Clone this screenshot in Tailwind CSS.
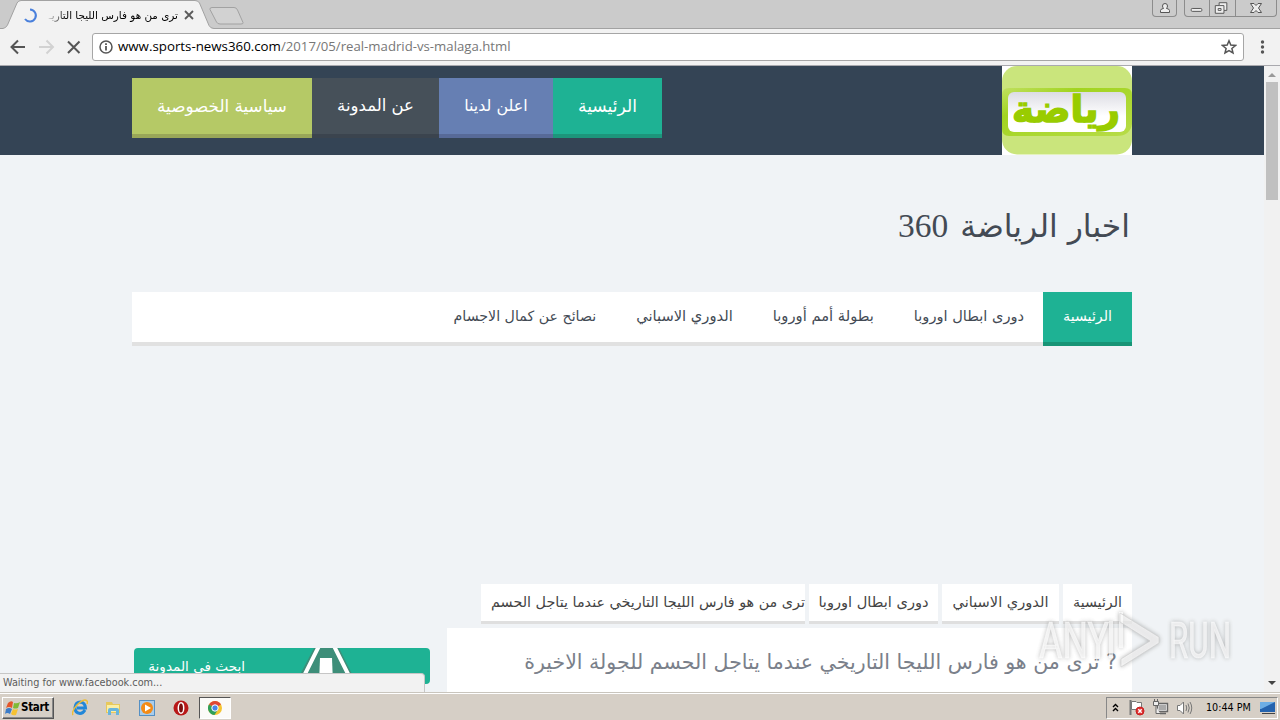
<!DOCTYPE html>
<html lang="ar">

<head>
    <meta charset="UTF-8">
    <meta name="viewport" content="width=device-width, initial-scale=1.0">
    <title>ترى من هو فارس الليجا التاريخي</title>
    <script src="https://cdn.jsdelivr.net/npm/@tailwindcss/browser@4"></script>
</head>

<body class="h-screen w-screen overflow-hidden bg-[#f0f3f6] font-['DejaVu_Sans',sans-serif]">
    <div class="flex h-full flex-col">
        <!-- tab strip -->
        <div class="relative flex h-7 shrink-0 justify-between bg-[#cbcbcb]">
            <svg class="absolute left-0 top-0" width="1280" height="29" fill="none">
                <path d="M0 28.500H3Q6 28 7.500 25L17 3Q18.500.5 21 .5H195Q198 .5 199.500 3L209 25.500Q210.500 28.500 214 28.500V30H0Z"
                    fill="#f2f2f2" />
                <path d="M0 28.500H3Q6 28 7.500 25L17 3Q18.500.5 21 .5H195Q198 .5 199.500 3L209 25.500Q210.500 28.500 214 28.500H1280" stroke="#a2a2a2" />
                <path d="M212 7.500H234Q236.500 7.500 237.500 10L243 22.500Q243.500 24 241 24H220Q217.500 24 216.500 22L210 9.500Q209.500 7.500 212 7.500Z"
                    fill="#d2d2d2" stroke="#a2a2a2" />
            </svg>
            <div class="relative flex h-full items-center pl-[23px] pt-0.5">
                <svg width="15" height="15" fill="none" stroke="#4a80dc" stroke-width="2">
                    <path d="M7 1.500A6 6 0 1 1 2 11" />
                </svg>
                <div dir="rtl" class="ml-2 w-[132px] whitespace-nowrap text-[10.4px] leading-5 text-black mask-l-from-85% mask-l-to-100%">ترى من هو فارس الليجا التاريـ</div>
                <svg class="ml-1.5" width="10" height="10" stroke="#5a5a5a" stroke-width="1.800">
                    <path d="M1 1L9 9M9 1L1 9" />
                </svg>
            </div>
            <div class="relative flex gap-[7px] pr-[3px]">
                <div class="flex h-[17px] w-[25px] items-center justify-center rounded-b border border-t-0 border-[#8c8c8c]">
                    <svg width="12" height="12" fill="#eee" stroke="#555">
                        <path d="M1.500 10.500V8.500Q2 6.500 4.500 6.500Q3.500 5 3.500 4Q3.500 1.500 6 1.500T8.500 4Q8.500 5 7.500 6.500Q10 6.500 10.500 8.500V10.500Z" />
                    </svg>
                </div>
                <div class="flex h-[17px] w-[93px] divide-x divide-[#8c8c8c] rounded-b border border-t-0 border-[#8c8c8c]">
                    <svg class="h-full w-[25px]" viewBox="0 0 25 16" fill="#eee" stroke="#555">
                        <rect x="6.500" y="8.500" width="11" height="3" rx="1" />
                    </svg>
                    <svg class="h-full w-[26px]" viewBox="0 0 26 16" fill="#eee" stroke="#555">
                        <path d="M9.500 2.500H17.500V10.500H14.500V13.500H5.500V5.500H9.500Z" />
                        <path d="M9.500 5.500H14.500V10.500M8.500 8.500H11.500V10.500H8.500Z" />
                    </svg>
                    <svg class="h-full w-10" viewBox="0 0 40 16" fill="#eee" stroke="#555">
                        <path d="M14.500 3.500H18L20 5.500L22 3.500H25.500L22.500 8L25.500 12.500H22L20 10.500L18 12.500H14.500L17.500 8Z" />
                    </svg>
                </div>
            </div>
        </div>

        <!-- toolbar -->
        <div class="flex h-[38px] shrink-0 items-center border-b border-[#a9a9ae] bg-[#f2f2f2] font-['Open_Sans',sans-serif] shadow-[inset_0_1px_#a2a2a2]">
            <svg width="92" height="38" class="shrink-0" fill="none" stroke="#555" stroke-width="2">
                <path d="M0 0H214" stroke="#f2f2f2" stroke-width="3" />
                <path d="M25 19H12M18 12.500L11.500 19L18 25.500" />
                <path d="M39 19H52M46.500 12.500L53 19L46.500 25.500" stroke="#d2d2d2" />
                <path d="M68 13.500L79.500 25M79.500 13.500L68 25" />
            </svg>
            <div class="flex h-7 w-[1152px] shrink-0 items-center rounded-[3px] border border-[#a6a6a6] bg-white px-1.5 text-[13.2px]">
                <svg width="14" height="14" fill="none" stroke="#555" stroke-width="1.500">
                    <circle cx="7" cy="7" r="6" />
                    <path d="M7 6V10.500M7 3.300V4.900" stroke-width="1.800" />
                </svg>
                <span class="ml-[5px] text-[13.3px] text-black">www.sports-news360.com</span><span class="text-[#777]">/2017/05/real-madrid-vs-malaga.html</span>
                <svg class="ml-auto" width="16" height="16" fill="none" stroke="#555" stroke-width="1.500">
                    <path d="M8 1.800L9.800 6.100L14.500 6.500L10.900 9.500L12 14L8 11.600L4 14L5.100 9.500L1.500 6.500L6.200 6.100Z" />
                </svg>
            </div>
            <svg class="ml-4" width="5" height="16" fill="#555">
                <circle cx="2.500" cy="3" r="1.700" />
                <circle cx="2.500" cy="8" r="1.700" />
                <circle cx="2.500" cy="13" r="1.700" />
            </svg>
        </div>

        <!-- page -->
        <div class="relative flex min-h-0 flex-1 overflow-hidden">
            <div dir="rtl" class="w-[1264px] shrink-0">
                <header class="h-[89px] bg-[#344455]">
                    <div class="mx-auto flex w-[1000px] items-start justify-between">
                        <svg width="130" height="89" direction="ltr">
                            <defs>
                                <linearGradient id="plate" x2="0" y2="1">
                                    <stop stop-color="#dcdce4" />
                                    <stop offset=".6" stop-color="#fff" />
                                </linearGradient>
                                <linearGradient id="ring" x2="1" y2="1">
                                    <stop stop-color="#c0e060" />
                                    <stop offset=".3" stop-color="#a2d420" />
                                    <stop offset="1" stop-color="#b8dc48" />
                                </linearGradient>
                            </defs>
                            <rect width="130" height="89" fill="#fff" />
                            <rect width="130" height="88.500" rx="15" fill="#cae57c" />
                            <path d="M7 22H123Q130 22 130 29V58Q128 70 115 70H7Q0 70 0 63V29Q0 22 7 22Z" fill="url(#ring)" />
                            <rect x="6" y="26" width="118" height="40" rx="6" fill="url(#plate)" />
                            <text x="64" y="56" text-anchor="middle" direction="rtl" textLength="108" lengthAdjust="spacingAndGlyphs"
                                class="font-['DejaVu_Sans'] text-[37px] font-bold" fill="#9c0" stroke="#9c0" stroke-width="1.500">رياضة</text>
                        </svg>
                        <nav class="mt-3 flex h-[60px] whitespace-nowrap leading-[56px] text-white">
                            <a class="w-[109px] border-b-4 border-[#1d957b] bg-[#1eb294] text-center text-[17.1px]">الرئيسية</a>
                            <a class="w-[114px] border-b-4 border-[#576a98] bg-[#667fb3] text-center text-[15.9px]">اعلن لدينا</a>
                            <a class="w-[127px] border-b-4 border-[#3b444e] bg-[#465059] text-center text-[16.5px]">عن المدونة</a>
                            <a class="w-[180px] border-b-4 border-[#99a758] bg-[#b5c966] text-center text-[16.8px]">سياسية الخصوصية</a>
                        </nav>
                    </div>
                </header>

                <div class="mx-auto w-[1000px]">
                    <h1 class="flex h-[137px] items-center gap-3 pr-0.5 pt-1.5 text-[31.4px] text-[#434a54]">
                        <span>اخبار الرياضة</span>
                        <span class="font-['Liberation_Serif',serif] text-[33.5px]">360</span>
                    </h1>

                    <nav class="flex h-[54px] whitespace-nowrap border-b-4 border-[#e1e1e1] bg-white text-[14.7px] leading-[48px] text-[#434a54]">
                        <a class="h-[54px] w-[89px] border-b-4 border-[#189476] bg-[#1eb294] text-center text-[14.2px] text-white">الرئيسية</a>
                        <a class="pr-[19px] text-[14.6px]">دورى ابطال اوروبا</a>
                        <a class="pr-10">بطولة أمم أوروبا</a>
                        <a class="pr-10">الدوري الاسباني</a>
                        <a class="pr-10 text-[14.2px]">نصائح عن كمال الاجسام</a>
                    </nav>

                    <div class="mt-[238px] flex gap-1 whitespace-nowrap text-[14.6px] leading-9 text-[#444]">
                        <a class="h-10 w-[69px] border-b-3 border-[#dfdfdf] bg-white text-center text-[14.2px]">الرئيسية</a>
                        <a class="h-10 w-[117px] border-b-3 border-[#dfdfdf] bg-white text-center">الدوري الاسباني</a>
                        <a class="h-10 w-[129px] border-b-3 border-[#dfdfdf] bg-white text-center">دورى ابطال اوروبا</a>
                        <a class="h-10 w-[324px] border-b-3 border-[#dfdfdf] bg-white text-[14.35px]">ترى من هو فارس الليجا التاريخي عندما يتاجل الحسم</a>
                    </div>

                    <div class="mt-1 flex justify-between">
                        <article class="h-[90px] w-[685px] bg-white pr-[15px]">
                            <h2 class="whitespace-nowrap text-[20.55px] leading-[68px] text-[#7a808a]">? ترى من هو فارس الليجا التاريخي عندما يتاجل الحسم للجولة الاخيرة</h2>
                        </article>
                        <aside dir="ltr" class="mt-5 flex h-9 w-[300px] justify-start pl-0.5">
                            <div class="flex w-[296px] rounded-sm bg-[#1eb294] pl-3.5 text-white">
                                <span dir="rtl" class="w-[97px] whitespace-nowrap text-[13.6px] leading-9">ابحث فى المدونة</span>
                                <svg class="ml-14" width="54" height="36">
                                    <path d="M13 0H38L56 36H-6Z" fill="#3d8e79" />
                                    <path d="M18-2L-1 36M33-2L52 36" stroke="#fff" stroke-width="4" />
                                    <path d="M19 10H31L32 36H18Z" fill="#fff" />
                                </svg>
                            </div>
                        </aside>
                    </div>
                </div>
            </div>

            <!-- scrollbar -->
            <div class="flex w-4 flex-col items-center bg-[#f1f1f1]">
                <svg width="16" height="16" fill="#999">
                    <path d="M4 11L8 7L12 11Z" />
                </svg>
                <div class="h-[118px] w-3 bg-[#c0c0c0]"></div>
                <svg class="mt-auto" width="16" height="17" fill="#444">
                    <path d="M4 6L8 10L12 6Z" />
                </svg>
            </div>

            <!-- status bubble -->
            <div class="absolute bottom-0 left-0 h-[19px] w-[425px] rounded-tr border border-b-0 border-l-0 border-[#c6c6c6] bg-[#f2f2f2] pl-[3px] font-['DejaVu_Sans_Condensed',sans-serif] text-[10.8px] leading-[18px] text-[#5c5c5c]">Waiting for www.facebook.com...</div>

            <!-- watermark -->
            <svg class="absolute bottom-3 right-[38px] overflow-visible opacity-90 drop-shadow-[0_0_2px_rgba(110,110,110,.7)]" width="206" height="80" fill="#fff">
                <g class="font-['Roboto'] text-[50px]" fill-opacity=".7" stroke="#fff" stroke-opacity=".5">
                    <text x="3" y="58" textLength="70" lengthAdjust="spacingAndGlyphs">ANY</text>
                    <text x="133" y="58" textLength="62" lengthAdjust="spacingAndGlyphs">RUN</text>
                </g>
                <path d="M75 21V58M85 12V48" fill="none" stroke="#fff" stroke-width="4" stroke-opacity=".7" />
                <path d="M84 13L123 37V43L85 67V59L114 41L84 22Z" fill="#fff" stroke="#ccc" stroke-width=".7" fill-opacity=".7" />
            </svg>
        </div>

        <!-- taskbar -->
        <div class="flex h-7 shrink-0 items-center justify-between border-t border-[#c9c5bd] bg-[#d6cfc6] font-['DejaVu_Sans_Condensed',sans-serif] text-[10.7px] text-black shadow-[inset_0_1px_#fff]">
            <div class="flex h-full items-center pt-0.5">
                <div class="ml-0.5 flex h-[22px] w-[52px] items-center border border-b-[#555] border-l-white border-r-[#555] border-t-white pl-0.5 shadow-[inset_-1px_-1px_#888]">
                    <svg class="shrink-0" width="16" height="16">
                        <path d="M3 3Q6 0 8 2L7 8Q4 6 1 8Z" fill="#e4562a" />
                        <path d="M9 3Q12 4 15 2L13 8Q10 9 8 8Z" fill="#7fba35" />
                        <path d="M1 9Q4 7 7 9L5 14Q2 12 0 14Z" fill="#3c7cc8" />
                        <path d="M8 9Q10 10 13 9L11 15Q8 16 6 14Z" fill="#f6c232" />
                    </svg>
                    <span class="text-[11.5px] font-bold tracking-[-.3px]">Start</span>
                </div>
                <!-- quick launch -->
                <svg class="ml-[18px]" width="16" height="17" fill="none">
                    <path d="M13 11Q11 14.500 8 14.500Q3 14 3 8.500Q3.500 3 8.500 3Q13 3.500 13.500 9H5" stroke="#2287d8" stroke-width="3" />
                    <path d="M1 16Q-1 13 5 6Q12-1 15 2Q16 3 15 5" stroke="#edbd36" stroke-width="1.500" />
                </svg>
                <svg class="ml-[17px]" width="16" height="16">
                    <path d="M1 2H7L8 4H15V13H1Z" fill="#e7c85b" />
                    <path d="M2 5H14V12H2Z" fill="#fbeea4" />
                    <path d="M3 15V10Q3 8 5 8H12Q14 8 14 10V15H11V11H6V15Z" fill="#69b5dc" />
                </svg>
                <svg class="ml-[18px]" width="16" height="16">
                    <rect x=".5" y=".5" width="15" height="15" fill="#a9cdec" stroke="#5590c4" />
                    <circle cx="8" cy="8" r="6" fill="#f38b17" />
                    <path d="M6 4.500L12 8L6 11.500Z" fill="#fff" />
                </svg>
                <svg class="ml-[18px]" width="16" height="16">
                    <circle cx="8" cy="8" r="7.500" fill="#b81818" />
                    <ellipse cx="8" cy="8" rx="2.700" ry="5.300" fill="#7b0d0d" stroke="#fff" stroke-width="1.500" />
                </svg>
                <div class="ml-2.5 flex h-[22px] w-8 items-center justify-center border border-b-white border-l-[#555] border-r-white border-t-[#555] bg-[#fbfaf8]">
                    <svg width="14" height="14">
                        <circle cx="7" cy="7" r="7" fill="#f4c430" />
                        <path d="M7 7L1 3.500A7 7 0 0 1 13 3.500Z" fill="#df4734" />
                        <path d="M7 7L.9 3.500A7 7 0 0 0 6.500 14L10 8.500Z" fill="#2f9f58" />
                        <circle cx="7" cy="7" r="3.200" fill="#4686e8" stroke="#fff" />
                    </svg>
                </div>
            </div>
            <!-- tray -->
            <div class="mr-0.5 mt-0.5 flex h-[22px] w-[172px] items-center border border-b-white border-l-[#888] border-r-white border-t-[#888] pl-1">
                <svg width="9" height="12" fill="none" stroke="#000" stroke-width="1.400">
                    <path d="M2 5L4.500 2.500L7 5M2 9L4.500 6.500L7 9" />
                </svg>
                <svg class="ml-2" width="18" height="17" fill="#fff" stroke="#777">
                    <path d="M2.500 1V16" stroke-width="2" />
                    <path d="M3.500 2.500H8L9 3.500H13.500V10.500H3.500Z" />
                    <circle cx="12" cy="12" r="4" fill="#e03030" stroke="#c62020" />
                    <path d="M10.300 10.300L13.700 13.700M13.700 10.300L10.300 13.700" stroke="#fff" stroke-width="1.400" />
                </svg>
                <svg class="ml-[6px]" width="17" height="17" fill="#eee" stroke="#666">
                    <path d="M5.500 4.500H15.500V12.500H5.500ZM8 14.500H14" stroke-width="1.400" />
                    <path d="M7 6H14V11H7Z" fill="#aaa" stroke="none" />
                    <path d="M1.500 2.500H6.500V6.500H1.500ZM4 7V14.500H8M2.500 0V2M5.500 0V2" />
                </svg>
                <svg class="ml-[7px]" width="18" height="16" fill="#fff" stroke="#777">
                    <path d="M1.500 5.500H4L7.500 2V14L4 10.500H1.500Z" />
                    <path d="M10 5Q11.500 8 10 11M12 3.500Q14.500 8 12 12.500M14 2Q17.500 8 14 14" fill="none" />
                </svg>
                <span class="ml-3 whitespace-nowrap pt-px">10:44 PM</span>
                <svg class="ml-auto mr-0.5" width="15" height="15">
                    <path d="M0 2H15V12H0Z" fill="#2463ae" />
                    <path d="M0 2H15L1 9H0Z" fill="#6daee5" />
                    <path d="M2 13.500H15" stroke="#444" />
                </svg>
            </div>
        </div>
    </div>
</body>

</html>
